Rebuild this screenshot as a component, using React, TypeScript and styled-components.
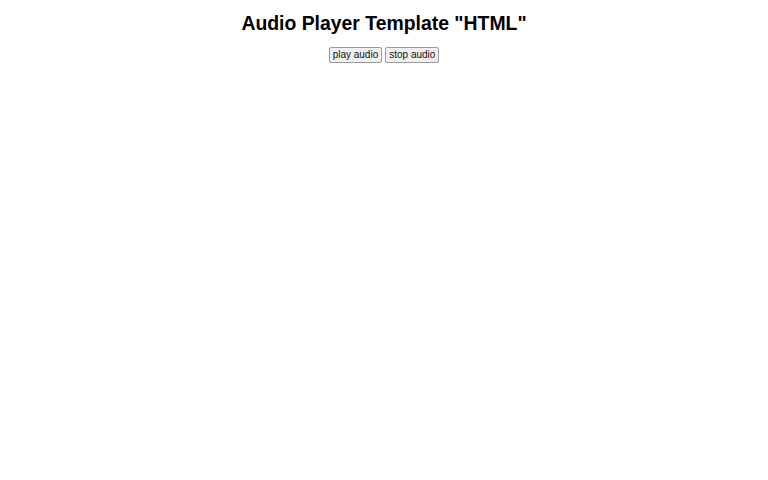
import styled, { createGlobalStyle } from "styled-components";

const GlobalStyle = createGlobalStyle`
  body {
    margin: 8px;
    background: #ffffff;
    font-family: "Liberation Sans", Arial, sans-serif;
  }
`;

const Player = styled.div`
  display: flex;
  flex-direction: column;
  align-items: center;
`;

const Title = styled.h1`
  margin: 4px 0 12px;
  font-size: 19.4px;
  font-weight: bold;
  color: #000000;
`;

const Controls = styled.div`
  display: flex;
  gap: 3px;
`;

const Button = styled.button`
  height: 16px;
  padding: 0 3px;
  font-family: "Liberation Sans", Arial, sans-serif;
  font-size: 10px;
  line-height: 14px;
  color: #111111;
  background: #f0f0f0;
  border: 1px solid #9a9a9a;
  border-radius: 2px;
  cursor: pointer;
`;

const App = () => {
  const play = () => {};
  const stop = () => {};

  return (
    <>
      <GlobalStyle />
      <Player>
        <Title>Audio Player Template "HTML"</Title>
        <Controls>
          <Button onClick={play}>play audio</Button>
          <Button onClick={stop}>stop audio</Button>
        </Controls>
      </Player>
    </>
  );
};

export default App;
